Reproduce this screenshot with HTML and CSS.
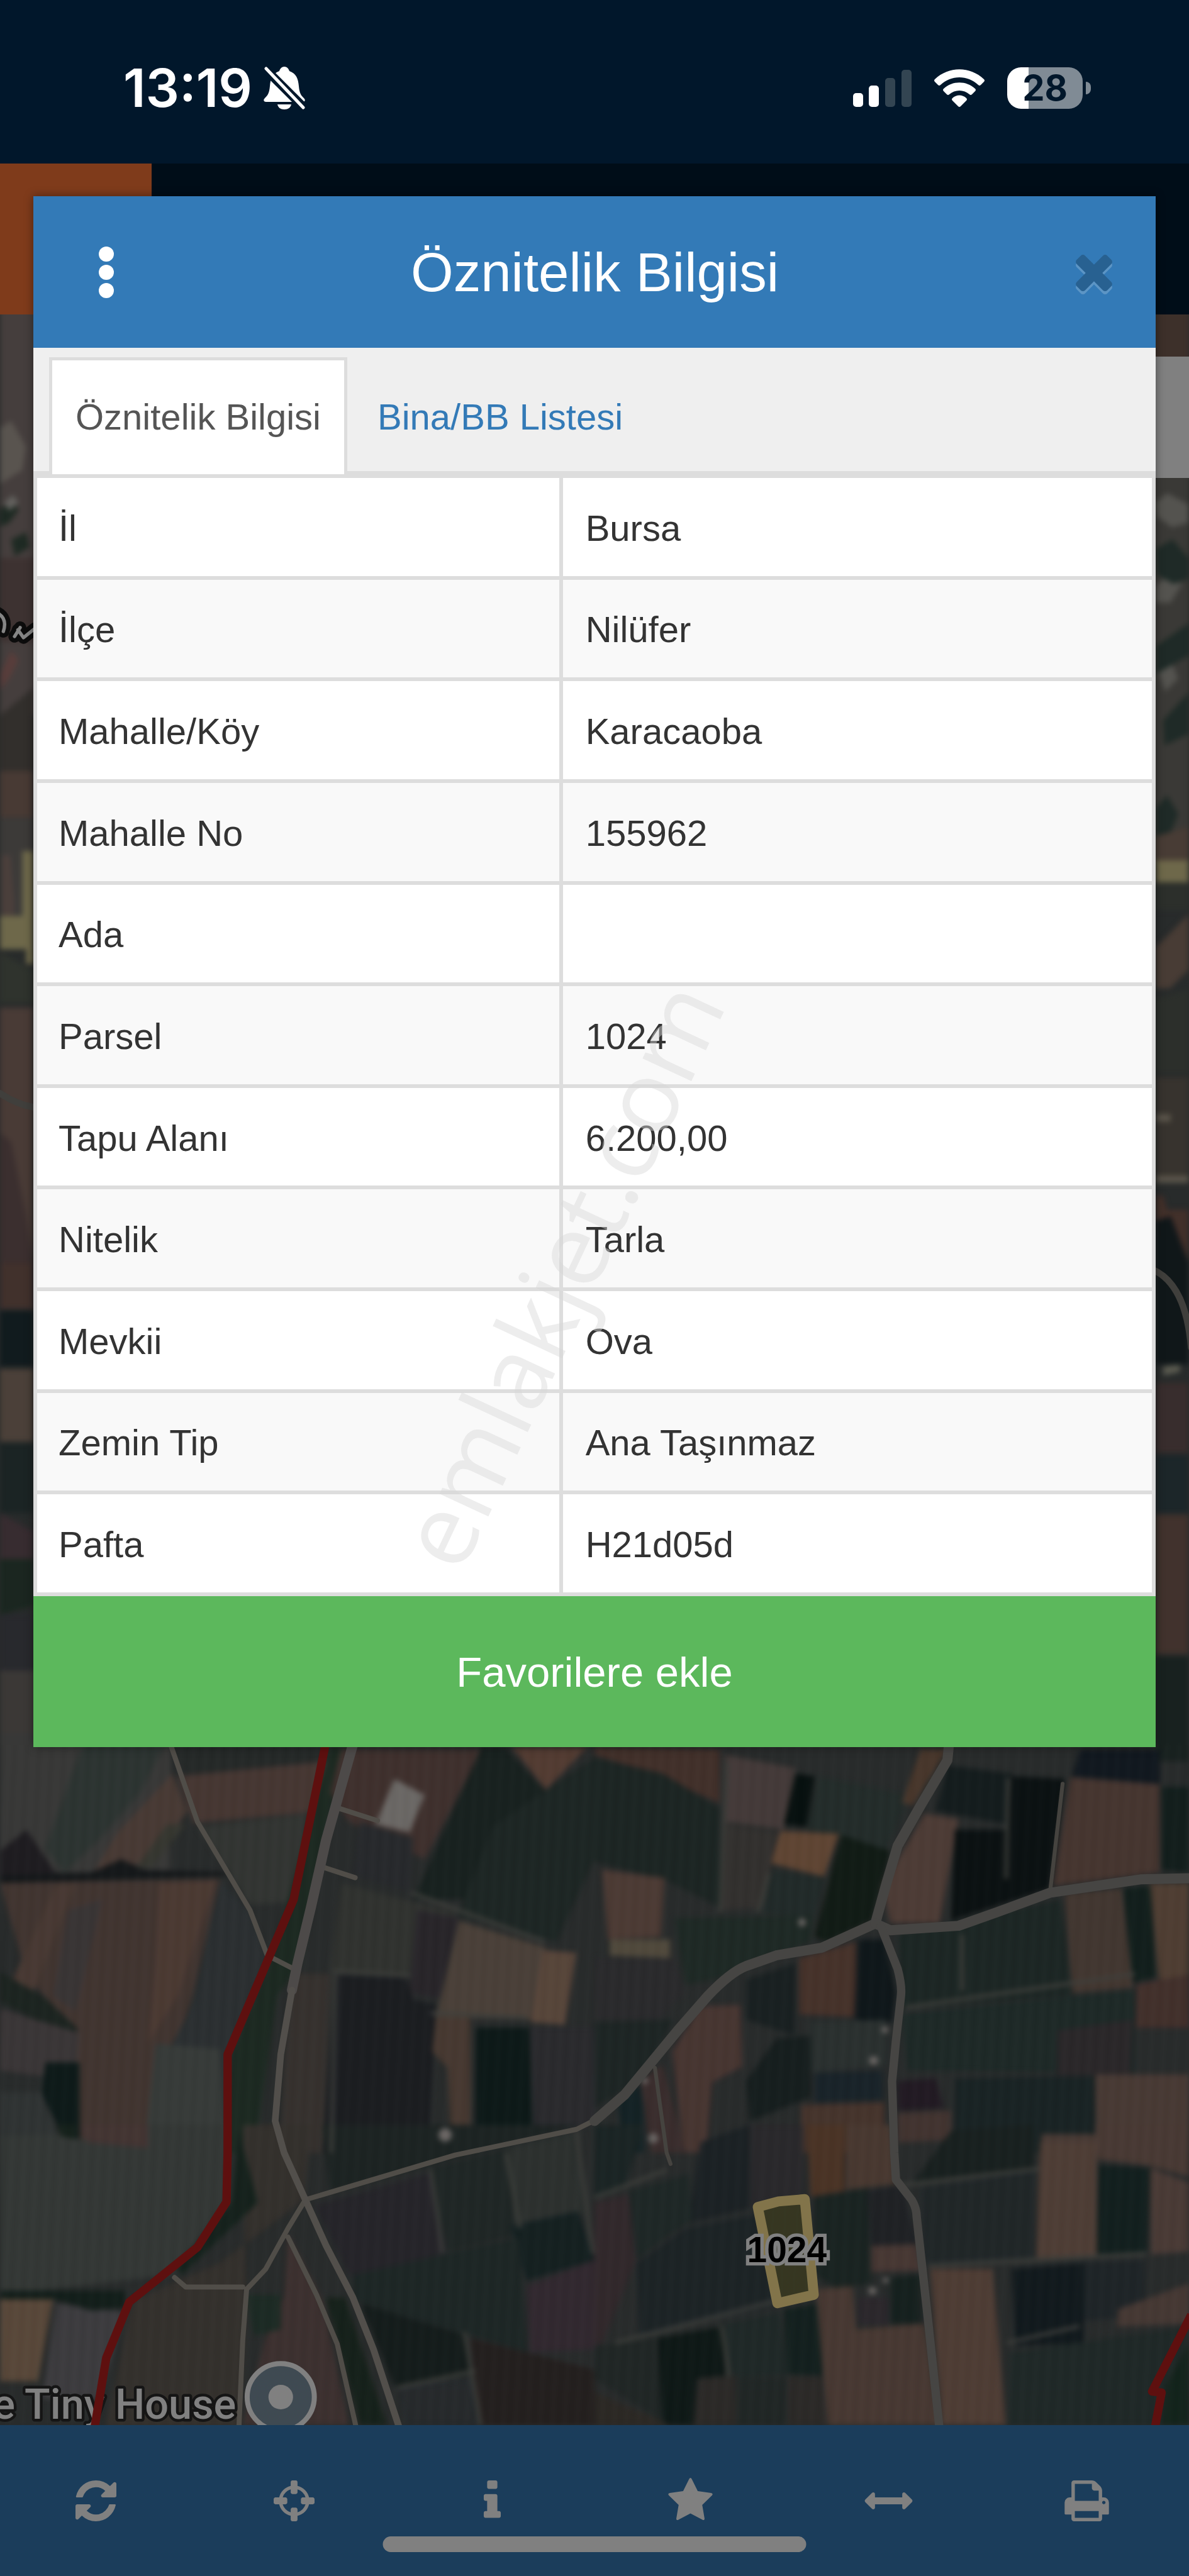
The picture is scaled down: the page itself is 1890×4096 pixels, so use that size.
FILE: index.html
```html
<!DOCTYPE html>
<html lang="tr">
<head>
  <meta charset="UTF-8" />
  <meta name="viewport" content="width=device-width, initial-scale=1.0" />
  <title>Öznitelik Bilgisi</title>
  <link rel="stylesheet" href="styles.css">
</head>
<body>
  <div class="screen">
    <header class="status-bar">
      <div class="status-left">
        <span class="time">13:19</span>
        <svg class="bell" viewBox="0 0 66 70" aria-hidden="true">
          <path fill="#fff" d="M33 1c-5 0-7 4-8 7C14 12 11 20 10 32c-1 12-4 15-8 19-3 3-2 6 2 6h58c4 0 5-3 2-6-4-4-7-7-8-19-1-12-4-20-15-24-1-3-3-7-8-7zM22 61c1 5 5 8 11 8s10-3 11-8z"/>
          <path stroke="#01172b" stroke-width="14" d="M2 4l62 62"/>
          <path stroke="#fff" stroke-width="5" stroke-linecap="round" d="M4 4l59 62"/>
        </svg>
      </div>
      <div class="status-right">
        <svg class="signal" viewBox="0 0 93 59" aria-hidden="true">
          <g fill="#fff"><rect y="37" width="16" height="22" rx="5"/><rect x="25" y="25" width="16" height="34" rx="5"/></g>
          <g fill="#334552"><rect x="51" y="13" width="16" height="46" rx="5"/><rect x="77" width="16" height="59" rx="5"/></g>
        </svg>
        <svg class="wifi" viewBox="0 0 80 60" aria-hidden="true">
          <g fill="#fff"><path d="M1 16C23-5 57-5 79 16q2 2 0 4l-5 5q-2 2-4 0C53 9 27 9 10 25q-2 2-4 0l-5-5q-2-2 0-4z"/><path d="M15 31c14-13 36-13 50 0q2 2 0 4l-5 5q-2 2-4 0c-9-8-23-8-32 0q-2 2-4 0l-5-5q-2-2 0-4z"/><path d="M29 46c6-6 16-6 22 0q2 2 0 4l-9 9q-2 2-4 0l-9-9q-2-2 0-4z"/></g>
        </svg>
        <div class="battery"><span>28</span></div>
      </div>
    </header>
    <div class="app-header"><div class="menu-block"></div></div>

    <main class="map">
      <svg class="map-image" viewBox="0 562 2126 3775" preserveAspectRatio="xMidYMin slice" aria-hidden="true">
        <defs>
          <filter id="soft" x="0" y="0" width="100%" height="100%" color-interpolation-filters="sRGB">
            <feGaussianBlur stdDeviation="5"/>
            <feColorMatrix type="saturate" values="0.85"/>
          </filter>
          <pattern id="rows" width="22" height="60" patternUnits="userSpaceOnUse" patternTransform="rotate(3)">
            <rect width="7" height="60" fill="#fff" opacity=".02"/><rect x="12" width="4" height="60" fill="#000" opacity=".06"/>
          </pattern>
        </defs>
        <rect y="562" width="2126" height="3775" fill="#282b2b"/>
        <g filter="url(#soft)">
          <!-- left edge -->
          <g transform="translate(0 550) scale(.333 1.658)">
            <path fill="#463e3c" d="M0 0h240v440H0z"/>
            <path fill="#5a544e" d="M0 130l60-8 80 28-20 25L0 190z"/>
            <path fill="#1d2a22" d="M0 218l60-12 40 12-50 14-50 4zM60 250l80-8 20 16-80 10z"/>
            <path fill="#62605c" d="M20 210l50-8 30 8-50 9z"/>
            <path fill="#3f3230" d="M0 270h200v90H0z"/>
            <path fill="#5c3c3a" d="M0 395l60-25 40 10-50 20-50 12z"/>
            <path fill="#332f2b" d="M0 440l180-30v90H0z"/>
            <path fill="#4a3a33" d="M0 500h180v50H0z"/>
            <path fill="#3c3a38" d="M0 550h180v110H0z"/>
            <path fill="#4c3f3a" d="M8 590h50l20 50v15H8z"/>
            <path fill="#6f6845" d="M0 656h120v-70h60v122h-40v-16H0z"/>
            <path fill="#2f332c" d="M0 695l180 20v35H0z"/>
            <path fill="#4b3b35" d="M0 755h180v270H0z"/>
            <path fill="#3d2f2e" d="M0 890l60 10 80 80 40 50H0z"/>
            <path fill="#43302b" d="M0 1030h180v50H0z"/>
            <path fill="#101b1f" d="M0 1082h180v60H0z"/>
            <path fill="#4d4037" d="M0 1145h180v78H0z"/>
            <path fill="#1a2424" d="M0 1225h180v75H0z"/>
            <path fill="#382c30" d="M0 1300l180 20v40H0z"/>
            <path fill="#19271f" d="M0 1350h180v50l-180 10z"/>
            <path fill="#28292e" d="M0 1410h180v60H0z"/>
            <path fill="#3b3836" d="M0 1470h240v98H0z"/>
          </g>
          <!-- right edge -->
          <g transform="translate(2040 550) scale(.333 1.658)">
            <path fill="#3f3029" d="M0 0h260v60H0z"/>
            <path fill="#3a3935" d="M0 180h260v420H0z"/>
            <path fill="#54534e" d="M80 210l60-10 116 12v20l-90 5-80-12zM80 300l70-12 70 10-60 20H80zM90 390l60-15 50 25-70 14z"/>
            <path fill="#1d2a27" d="M80 260l90-10 86 20v22l-80 6-90-10zM80 365l180-25v35l-180 20zM120 445l136-30v45l-130 12zM80 540l60-14 60 20-60 30H80z"/>
            <path fill="#4a3c33" d="M80 570l176-10v40H80zM80 690l80-16 96-20v60l-100 20H80z"/>
            <path fill="#6f6845" d="M80 596h176v24H80z"/>
            <path fill="#2c2f2b" d="M80 620h176v30H80zM80 745l176-10v90H80z"/>
            <path fill="#38332d" d="M80 830h176v110H80z"/>
            <path fill="#5b5448" d="M80 870h80v8H80zM80 936h176v8H80z"/>
            <path fill="#452f28" d="M80 958h40l20 15h115v60l-150-30H80z"/>
            <path fill="#0f171a" d="M80 985l80-5 96 50v110H80z"/>
            <path fill="#5a5a4e" d="M120 1142l90-2v8l-90 4z"/>
            <path fill="#3a2d2c" d="M80 1160h176v75H80z"/>
            <path fill="#1b262a" d="M80 1238h176v62H80z"/>
            <path fill="#43322b" d="M80 1302h176v150H80z"/>
            <path fill="#17211f" d="M80 1455h176v113H80z"/>
          </g>
          <!-- fields west -->
          <g transform="translate(0 3100) scale(.678 .4783)">
            <path fill="#383837" d="M0 0h450v520H0z"/>
            <path fill="#2b3431" d="M230 0h220L370 220 260 400 170 520l-50-90 70-280z"/>
            <path fill="#252928" d="M440 0h430v100L500 160l-40-60z"/>
            <path fill="#4a3a33" d="M455 150l40 140-95 190-150 30 60-140z"/>
            <path fill="#36372f" d="M440 340l50 0-90 160-40 0z"/>
            <path fill="#483731" d="M470 160l390-55-40 190-310 40z"/>
            <path fill="#323532" d="M520 350l290-50-30 330-120 10z"/>
            <path fill="#1e1c20" d="M70 360l80 170H0v-90z"/>
            <path fill="#15181a" d="M0 530l240-10 80-50 60 40 220 8v14L0 560z"/>
            <path fill="#43352f" d="M0 560l580-15-70 420-60 290-30 320H180l20-460-130-210z"/>
            <path fill="#4a3931" d="M150 560l50 0-110 400-60-30z"/>
            <path fill="#3a3535" d="M180 660l90-40-70 420-60-60z"/>
            <path fill="#4d3930" d="M420 560l150-10-100 430-80 180 20-300z"/>
            <path fill="#2a2f31" d="M580 550l80 120 45 160-90 340-30 220 20 180H390l30-320 90-240z"/>
            <path fill="#363b39" d="M410 1160l170 20 20 388H380z"/>
            <path fill="#1b2420" d="M0 890l120 100 90 120-60 10L0 1000z"/>
            <path fill="#3b3637" d="M0 1030l210 90-10 150-90 10-110-20z"/>
            <path fill="#0c1a19" d="M120 1230h90v290l-40-10-60-160z"/>
            <path fill="#2f3333" d="M0 1340h110l60 228H0z"/>
            <path fill="#1a2a20" d="M870 50h40l-70 440-50 380 -60 110-60 588h-70l10-370 110-370z"/>
            <path fill="#37312d" d="M770 900l100 0-20 668H740l10-300z"/>
            <path fill="#41302c" d="M900 60h370l-90 250-60 160-200-140-50-110z"/>
            <path fill="#6c6864" d="M1040 170l80 60-40 140-90-30z"/>
            <path fill="#27292c" d="M950 330l140 60-10 200-150-60z"/>
            <path fill="#17211f" d="M1270 50h60l110 170-90 250-60 150-200 0z"/>
            <path fill="#1c2624" d="M1440 210l128-120v380l-100 310-260-100 90-330z"/>
            <path fill="#563b30" d="M1350 50h200l-110 160z"/>
            <path fill="#30322f" d="M900 560l300 110-30 230-300-10z"/>
            <path fill="#28252a" d="M1100 660l110 30-50 300-80-20z"/>
            <path fill="#4b4037" d="M1210 700l230 100-30 270-260-10z"/>
            <path fill="#5a4538" d="M1430 810l90 10-30 270-90-10z"/>
            <path fill="#1b1d21" d="M885 905l185 10 20 80 60 20-20 555H850l20-400z"/>
            <path fill="#0b1918" d="M1255 1100h140l10 400-150 30z"/>
            <path fill="#2a2a2e" d="M1400 1100h168v360l-160 50z"/>
            <path fill="#49392f" d="M1150 1060h90v450l-50 20-10-280-40-60z"/>
          </g>
          <!-- fields east -->
          <g transform="translate(1063 3100) scale(.678 .4783)">
            <path fill="#442f28" d="M0 50l330 10v200L150 150 0 80z"/>
            <path fill="#1b2523" d="M0 90l180 60 150 130v370l-140-100L0 480z"/>
            <path fill="#453a38" d="M345 80l185 50-30 230-160-30z"/>
            <path fill="#32302e" d="M345 340l140 30-40 280-110 10z"/>
            <path fill="#06100f" d="M530 150l50 10-20 190-60-10z"/>
            <path fill="#222c2a" d="M590 160l240 70-60 210-150-60-60-20z"/>
            <path fill="#63442f" d="M490 365l155 10-40 160-140-50z"/>
            <path fill="#202a29" d="M470 510l140 30-30 150-140-20z"/>
            <path fill="#101b15" d="M650 380l130 60-50 260-120 80-30-20z"/>
            <path fill="#4b3729" d="M860 60h70l-90 210-30-10z"/>
            <path fill="#4f3b34" d="M870 300l90 20-50 390-130 0-20-140z"/>
            <path fill="#0a1112" d="M950 360l140 0 10-200 140 10-40 410-260 120z"/>
            <path fill="#131c1d" d="M930 120l170 30-10 190-190-50z"/>
            <path fill="#101820" d="M1280 60h210v130l-230-30z"/>
            <path fill="#48352e" d="M1255 165l235 25v330l-280 50z"/>
            <path fill="#111e1c" d="M1495 200h73v320l-73-10z"/>
            <path fill="#4e3a32" d="M20 510l165 30-10 220-140 10z"/>
            <path fill="#51493a" d="M40 770h160v70L40 830z"/>
            <path fill="#2a2a2c" d="M0 840h210l30 130-70 100H0z"/>
            <path fill="#1d2925" d="M210 690l370-10-10 100-250 140-80 20z"/>
            <path fill="#1c2524" d="M0 1080l210-10-90 230L0 1400z"/>
            <path fill="#182021" d="M400 920l130-60v270l-130-60z"/>
            <path fill="#493128" d="M540 840l150-60v280l-150-10z"/>
            <path fill="#0e171b" d="M695 770h70l30 200-10 110-100-10z"/>
            <path fill="#1b2624" d="M800 750l430-130 30 360-450 50z"/>
            <path fill="#44372f" d="M1240 600l150-20 30 370-160 20z"/>
            <path fill="#101f1c" d="M1395 580l70-10 15 340-60 20z"/>
            <path fill="#513e30" d="M1465 560h103v360l-80 0z"/>
            <path fill="#452f2a" d="M1430 940l138-40v200l-140 0z"/>
            <path fill="#1c2927" d="M810 1050l615-90v310l-600-10z"/>
            <path fill="#2a2729" d="M1220 1110l200-40-5 200-195 30z"/>
            <path fill="#4a3530" d="M280 1020l105-5 5 230-80 60-15 263h-60l-30-380z"/>
            <path fill="#151e1e" d="M480 1140l90-10v230l-160 90-10-150z"/>
            <path fill="#29302f" d="M570 1080l200-10v170l-200 30z"/>
            <path fill="#18232a" d="M580 1270l180-10v110l-180 10z"/>
            <path fill="#231a24" d="M800 1300l100-10 20 110-120 10z"/>
            <path fill="#48332a" d="M545 1390l220-10v188H545z"/>
            <path fill="#44342f" d="M800 1420l140-10v110l-140 10z"/>
            <path fill="#182324" d="M950 1290l370-10v288H950z"/>
            <path fill="#4a3a33" d="M1320 1275h248v293h-390v-70l145 0z"/>
            <path fill="#122226" d="M60 1380l70-80v268H80z"/>
            <path fill="#3c2d2c" d="M120 1300l60-60 60 328h-90z"/>
          </g>
          <!-- fields south west -->
          <g transform="translate(0 3800) scale(.678 .5153)">
            <path fill="#333735" d="M0 40l160-10 50 20 180 10V0h210v260L460 520 0 590z"/>
            <path fill="#453431" d="M210 0h180v80l-160-20z"/>
            <path fill="#14211b" d="M150 0h50v50l-40-10z"/>
            <path fill="#34302b" d="M640 0h180l-20 260-220 220-230 130-70 440h350l20-400z"/>
            <path fill="#5a4736" d="M0 605h140L100 890H0z"/>
            <path fill="#3c3b3e" d="M150 620l180 30-70 300H110z"/>
            <path fill="#111e1a" d="M0 575h330v60l-90 10-100-40H0z"/>
            <path fill="#13221c" d="M630 20l50 250-200 250-20-20 150-230z"/>
            <path fill="#3e302e" d="M760 380l90 230 70 433H640l60-300 50-150z"/>
            <path fill="#1a2b24" d="M650 590h90v120l-70 20z"/>
            <path fill="#1b2322" d="M850 0h680l-660 230z"/>
            <path fill="#25242a" d="M830 280l330-120 20 300-250 80z"/>
            <path fill="#1e2625" d="M1130 150l210-70 30 300-190 60z"/>
            <path fill="#2b302e" d="M1340 80l170-50 30 280-180 50z"/>
            <path fill="#132021" d="M1345 350l180-50 43 170-180 70z"/>
            <path fill="#1c2625" d="M930 520l440-130 20 400-460-180z"/>
            <path fill="#322830" d="M1390 560l178-90v310l-170 10z"/>
            <path fill="#131c1b" d="M950 620l280 110 10 140-200 40z"/>
            <path fill="#25292c" d="M1050 910l190-30 20 163h-190z"/>
            <path fill="#241f1e" d="M1240 740l328 110v193h-300z"/>
            <path fill="#142119" d="M860 600l50 0 110 443h-70z"/>
          </g>
          <!-- fields south east -->
          <g transform="translate(1063 3800) scale(.678 .5153)">
            <path fill="#192424" d="M0 0h130l-50 220-80 40z"/>
            <path fill="#1a2125" d="M280 60l130-60v290l-160 50z"/>
            <path fill="#29282b" d="M410 0h140v240l-140 40z"/>
            <path fill="#4d3222" d="M560 0h100v230l-90 20z"/>
            <path fill="#4a382e" d="M665 0h115l15 205-130 20z"/>
            <path fill="#32282b" d="M0 270l90-30 20 230-90 290H0z"/>
            <path fill="#1d2726" d="M90 230l160-60 10 160-70 60-80 80z"/>
            <path fill="#1b2326" d="M110 480l130-120 190-50 50 320-360 100z"/>
            <path fill="#182321" d="M580 250l140-30 10 330-90 20-60-50z"/>
            <path fill="#1f2125" d="M720 230l90-20 40 200-120 10z"/>
            <path fill="#1f2628" d="M860 220l300-60v300l-290 20z"/>
            <path fill="#17201f" d="M940 20l220-20v150l-320 50z"/>
            <path fill="#503d33" d="M1175 60l150 0v400l-160 0z"/>
            <path fill="#4a3932" d="M1320 0h248v180l-110-40-130-20z"/>
            <path fill="#101f1e" d="M1330 140l135 10-10 300-130 10z"/>
            <path fill="#4b3a34" d="M1465 150l103 50v240l-100 10z"/>
            <path fill="#493732" d="M730 420l120-5 10 90-130 5z"/>
            <path fill="#14201e" d="M780 530l80-10v170l-80 0z"/>
            <path fill="#2b272c" d="M695 600l80 0v95l-80-5z"/>
            <path fill="#493830" d="M585 570l95-10 10 150 180-20 40 353H615z"/>
            <path fill="#503c32" d="M885 500h165l35 543H915z"/>
            <path fill="#10191e" d="M1100 500l190-20v280l-180 5z"/>
            <path fill="#1d2428" d="M1290 480l160-10v190l-160 20z"/>
            <path fill="#473832" d="M1380 640l188-90v140l-190 10z"/>
            <path fill="#1e2827" d="M1095 790l473-90v343h-480z"/>
            <path fill="#0d1816" d="M165 740l170-40 10 170-75 10-10 163h-80z"/>
            <path fill="#1e2827" d="M340 690l150-40 20 220-160 10z"/>
            <path fill="#11201e" d="M500 640l85-20 15 250-90-5z"/>
            <path fill="#2b2927" d="M275 880l100-10v173H260zM510 875h90l10 168H510z"/>
            <path fill="#1f2625" d="M375 880h130v163H375zM0 770l160-30 20 290L0 880z"/>
            <path fill="#2c2823" d="M0 930l200 113H0z"/>
            <path fill="#10241a" d="M1568 760v283h-70l10-140z"/>
          </g>
          <rect y="3120" width="2126" height="1217" fill="url(#rows)"/>
          <g fill="#6b6664">
            <circle cx="1434" cy="3438" r="7"/><circle cx="1582" cy="3630" r="6"/><circle cx="1562" cy="3685" r="8"/>
            <circle cx="1153" cy="3721" r="6"/><circle cx="1168" cy="3824" r="9"/><circle cx="796" cy="3818" r="12"/>
            <circle cx="1560" cy="4097" r="7"/><circle cx="1584" cy="4078" r="5"/>
          </g>
          <g fill="none" stroke="#3f403c" stroke-width="6">
            <path d="M1300 3150l-12 270M1375 3350l-20 70M1803 3180l-4 180M1720 3460v100M1620 3590l410-60M735 3385l240 88M600 3530l-8 320M595 3525l140 8M770 3600l170 8"/>
            <path d="M1063 3930l130-50M1100 4190l300-78M1290 4160l14 90M1610 3908l250-30M1660 4052l390-22M1800 4190l130-30M770 3880l22 150M905 3850l25 135M1030 3810l30 220M830 4170l30 167M710 4270l140-30"/>
          </g>
        </g>
        <!-- roads -->
        <g fill="none" stroke-linejoin="round" stroke-linecap="round">
          <g stroke="#504d48" stroke-width="9">
            <path d="M305 3120l48 138 54 91 40 67 31 81 47 24"/>
            <path d="M546 3934l-31 51-40 73-34 36-7 92-7 160M515 4001l51 103 37 88 34 150M312 4073l20 17h102"/>
            <path d="M546 3934l268-80 217-46 40-20"/>
            <path d="M1171 3698l21 152 7 20M1900 3190l-22 190" stroke="#45433f" stroke-width="7"/>
            <path d="M600 3232l75 24M580 3340l55 18"/>
          </g>
          <path stroke="#4d4a49" stroke-width="18" d="M631 3120l-48 171-27 120-24 100-10 48"/>
          <path stroke="#524f4b" stroke-width="12" d="M522 3559l-20 115-10 119 16 57 38 84 37 82 48 93 37 93 46 140"/>
          <g stroke="#464543" stroke-width="18">
            <path d="M1063 3793l54-47 95-115 54-62q40-42 68-53l54-19 82-14 95-43 20-72 20-67 41-72 48-81 3-30"/>
            <path d="M1565 3440l27 12 122-8 68-24 95-35 162-24 90-2"/>
            <path d="M1575 3445l30 76q8 30 6 48l-9 81-7 72 4 128 3 48 28 36q9 15 9 30l21 191 20 190" stroke-width="15"/>
          </g>
          <path stroke="#403f3c" stroke-width="12" d="M2060 2270q60 25 70 140M0 1955q30 20 60 25"/>
          <path stroke="#0c0c0c" stroke-width="22" d="M-6 1095q20 10 12 34M26 1138l10-16M32 1126l10 14 20-16"/>
          <path stroke="#858585" stroke-width="6" d="M-6 1095q20 10 12 34M26 1138l10-16M32 1126l10 14 20-16"/>
        </g>
        <text class="place" x="422" y="4326">e Tiny House</text>
        <!-- cadastral boundary -->
        <g fill="none" stroke="#5e100f" stroke-width="15" stroke-linejoin="round">
          <path d="M583 3115l-58 282-118 277v176l-2 88-52 81-122 98-41 100-21 125M2130 4140l-70 137 17 2-12 63"/>
        </g>
        <circle cx="502" cy="4287" r="60" fill="#3f4a52" stroke="#808080" stroke-width="9"/>
        <circle cx="502" cy="4287" r="22" fill="#808080"/>
        <path fill="#393a1f" fill-opacity=".8" stroke="#82744a" stroke-width="18" stroke-linejoin="round" d="M1355 3947l37-10 47-4 16 171-65 15z"/>
        <text class="parcel" x="1407" y="4046">1024</text>
      </svg>
      <div class="map-button"></div>
    </main>

    <nav class="toolbar">
      <button type="button" aria-label="Yenile"><svg viewBox="128 128 1536 1536"><path transform="translate(128 128)" d="M1511 928q0 5-1 7-64 268-268 434.5t-478 166.5q-146 0-282.5-55t-243.5-157l-129 129q-19 19-45 19t-45-19-19-45v-448q0-26 19-45t45-19h448q26 0 45 19t19 45-19 45l-137 137q71 66 161 102t187 36q134 0 250-65t186-179q11-17 53-117 8-23 30-23h192q13 0 22.5 9.5t9.5 22.5zm25-800v448q0 26-19 45t-45 19h-448q-26 0-45-19t-19-45 19-45l138-138q-148-137-349-137-134 0-250 65t-186 179q-11 17-53 117-8 23-30 23h-199q-13 0-22.5-9.5t-9.5-22.5v-7q65-268 270-434.5t480-166.5q146 0 284 55.5t245 156.5l130-129q19-19 45-19t45 19 19 45z"/></svg></button>
      <button type="button" aria-label="Konum"><svg viewBox="128 128 1536 1536"><path d="M1325 1024h-109q-26 0-45-19t-19-45v-128q0-26 19-45t45-19h109q-32-108-112.5-188.5t-188.5-112.5v109q0 26-19 45t-45 19h-128q-26 0-45-19t-19-45v-109q-108 32-188.5 112.5t-112.5 188.5h109q26 0 45 19t19 45v128q0 26-19 45t-45 19h-109q32 108 112.5 188.5t188.5 112.5v-109q0-26 19-45t45-19h128q26 0 45 19t19 45v109q108-32 188.5-112.5t112.5-188.5zm339-192v128q0 26-19 45t-45 19h-143q-37 161-154.5 278.5t-278.5 154.5v143q0 26-19 45t-45 19h-128q-26 0-45-19t-19-45v-143q-161-37-278.5-154.5t-154.5-278.5h-143q-26 0-45-19t-19-45v-128q0-26 19-45t45-19h143q37-161 154.5-278.5t278.5-154.5v-143q0-26 19-45t45-19h128q26 0 45 19t19 45v143q161 37 278.5 154.5t154.5 278.5h143q26 0 45 19t19 45z"/></svg></button>
      <button type="button" aria-label="Bilgi"><svg viewBox="128 128 1536 1536"><path d="M1216 1344v128q0 26-19 45t-45 19h-512q-26 0-45-19t-19-45v-128q0-26 19-45t45-19h64v-384h-64q-26 0-45-19t-19-45v-128q0-26 19-45t45-19h384q26 0 45 19t19 45v576h64q26 0 45 19t19 45zm-128-1152v192q0 26-19 45t-45 19h-256q-26 0-45-19t-19-45v-192q0-26 19-45t45-19h256q26 0 45 19t19 45z"/></svg></button>
      <button type="button" aria-label="Favoriler"><svg viewBox="128 128 1536 1536"><path d="M1728 647q0 22-26 48l-363 354 86 500q1 7 1 20 0 21-10.5 35.5t-30.5 14.5q-19 0-40-12l-449-236-449 236q-22 12-40 12-21 0-31.5-14.5t-10.5-35.5q0-6 2-20l86-500-364-354q-25-27-25-48 0-37 56-46l502-73 225-455q19-41 49-41t49 41l225 455 502 73q56 9 56 46z"/></svg></button>
      <button type="button" aria-label="Ölçüm"><svg viewBox="128 128 1536 1536"><path d="M1792 896q0 26-19 45l-256 256q-19 19-45 19t-45-19-19-45v-128h-1024v128q0 26-19 45t-45 19-45-19l-256-256q-19-19-19-45t19-45l256-256q19-19 45-19t45 19 19 45v128h1024v-128q0-26 19-45t45-19 45 19l256 256q19 19 19 45z"/></svg></button>
      <button type="button" aria-label="Yazdır"><svg viewBox="128 128 1536 1536"><path d="M448 1536h896v-256h-896v256zm0-640h896v-384h-160q-40 0-68-28t-28-68v-160h-640v640zm1152 64q0-26-19-45t-45-19-45 19-19 45 19 45 45 19 45-19 19-45zm128 0v416q0 13-9.5 22.5t-22.5 9.5h-224v160q0 40-28 68t-68 28h-960q-40 0-68-28t-28-68v-160h-224q-13 0-22.5-9.5t-9.5-22.5v-416q0-79 56.5-135.5t135.5-56.5h64v-544q0-40 28-68t68-28h672q40 0 88 20t76 48l152 152q28 28 48 76t20 88v256h64q79 0 135.5 56.5t56.5 135.5z"/></svg></button>
      <div class="home-indicator"></div>
    </nav>

    <section class="modal" role="dialog" aria-labelledby="modalTitle">
      <div class="modal-header">
        <button type="button" class="more" aria-label="Menü"><i></i><i></i><i></i></button>
        <h1 id="modalTitle">Öznitelik Bilgisi</h1>
        <button type="button" class="close" aria-label="Kapat"><svg viewBox="302 302 1188 1252"><path d="M1490 1322q0 40-28 68l-136 136q-28 28-68 28t-68-28l-294-294-294 294q-28 28-68 28t-68-28l-136-136q-28-28-28-68t28-68l294-294-294-294q-28-28-28-68t28-68l136-136q28-28 68-28t68 28l294 294 294-294q28-28 68-28t68 28l136 136q28 28 28 68t-28 68l-294 294 294 294q28 28 28 68z"/></svg></button>
      </div>
      <div class="tabs">
        <a href="#oznitelik" class="tab active">Öznitelik Bilgisi</a>
        <a href="#bina" class="tab">Bina/BB Listesi</a>
      </div>
      <table class="info" id="oznitelik">
        <tr><th scope="row">İl</th><td>Bursa</td></tr>
        <tr><th scope="row">İlçe</th><td>Nilüfer</td></tr>
        <tr><th scope="row">Mahalle/Köy</th><td>Karacaoba</td></tr>
        <tr><th scope="row">Mahalle No</th><td>155962</td></tr>
        <tr><th scope="row">Ada</th><td></td></tr>
        <tr><th scope="row">Parsel</th><td>1024</td></tr>
        <tr><th scope="row">Tapu Alanı</th><td>6.200,00</td></tr>
        <tr><th scope="row">Nitelik</th><td>Tarla</td></tr>
        <tr><th scope="row">Mevkii</th><td>Ova</td></tr>
        <tr><th scope="row">Zemin Tip</th><td>Ana Taşınmaz</td></tr>
        <tr><th scope="row">Pafta</th><td>H21d05d</td></tr>
      </table>
      <button type="button" class="favorite">Favorilere ekle</button>
    </section>
    <div class="watermark">emlakjet.com</div>
  </div>
</body>
</html>
```
FILE: styles.css
```css
* {
  box-sizing: border-box;
}
body {
  margin: 0;
  background: #01172b;
  font-family: "Liberation Sans", Helvetica, Arial, sans-serif;
  font-size: 58px;
  color: #333;
}
button {
  padding: 0;
  border: none;
  background: none;
  font-family: inherit;
  cursor: pointer;
}
.screen {
  position: relative;
  display: flex;
  flex-direction: column;
  min-height: 100vh;
  overflow: hidden;
}

/* status bar */
.status-bar {
  display: flex;
  justify-content: space-between;
  height: 260px;
  padding: 107px 169px 87px 196px;
  font-family: Inter, "Liberation Sans", sans-serif;
  color: #fff;
}
.status-left,
.status-right {
  display: flex;
  align-items: center;
}
.status-left {
  gap: 18px;
}
.status-right {
  gap: 36px;
}
.time {
  font-size: 84px;
  font-weight: 600;
  line-height: 66px;
}
.bell {
  width: 66px;
  height: 70px;
}
.signal {
  width: 93px;
  height: 59px;
}
.wifi {
  width: 80px;
  height: 60px;
}
.battery {
  position: relative;
  display: flex;
  align-items: center;
  justify-content: center;
  width: 120px;
  height: 66px;
  border-radius: 22px;
  background: linear-gradient(90deg, #fff 34px, #808b95 34px);
  color: #01172b;
  font-size: 56px;
  font-weight: 700;
}
.battery::after {
  content: "";
  position: absolute;
  right: -13px;
  top: 23px;
  width: 8px;
  height: 20px;
  border-radius: 0 8px 8px 0;
  background: #808b95;
}
.app-header {
  height: 240px;
  background: #000d18;
}
.menu-block {
  width: 241px;
  height: 100%;
  background: #7f3b1b;
}

/* map */
.map {
  position: relative;
  flex: 1;
  overflow: hidden;
}
.map-image {
  position: absolute;
  width: 100%;
  height: 100%;
}
.map-button {
  position: absolute;
  top: 67px;
  right: 0;
  width: 120px;
  height: 193px;
  background: #808080;
}
.place {
  font: 500 75px Roboto, sans-serif;
  fill: #808080;
  stroke: #151515;
  stroke-width: 10px;
  stroke-linejoin: round;
  paint-order: stroke;
  text-anchor: end;
}
.parcel {
  font: bold 64px "Liberation Sans", Arial, sans-serif;
  fill: #000;
  stroke: #808080;
  stroke-width: 12px;
  paint-order: stroke;
  text-anchor: middle;
}

/* bottom toolbar */
.toolbar {
  position: relative;
  display: flex;
  height: 240px;
  background: #1b3d5b;
}
.toolbar button {
  flex: 1;
  display: flex;
  align-items: center;
  justify-content: center;
  padding-right: 10px;
}
.toolbar svg {
  width: 65px;
  height: 65px;
  fill: #808080;
  overflow: visible;
}
.home-indicator {
  position: absolute;
  left: 50%;
  bottom: 38px;
  width: 673px;
  height: 25px;
  border-radius: 13px;
  background: #808080;
  transform: translateX(-50%);
}

/* modal */
.modal {
  position: absolute;
  top: 312px;
  left: 53px;
  right: 53px;
  background: #fff;
  box-shadow: 0 0 14px rgba(0, 0, 0, 0.4);
}
.modal-header {
  display: flex;
  align-items: center;
  justify-content: space-between;
  height: 241px;
  padding: 0 69px 0 104px;
  background: #337ab7;
  color: #fff;
}
.modal-header h1 {
  margin: 0;
  font-size: 87px;
  font-weight: normal;
}
.more {
  display: flex;
  flex-direction: column;
  gap: 5px;
  width: 24px;
}
.more i {
  height: 24px;
  border-radius: 50%;
  background: #fff;
}
.close svg {
  display: block;
  width: 58px;
  height: 61px;
  opacity: 0.2;
  filter: drop-shadow(0 5px 0 #fff);
}
.tabs {
  display: flex;
  gap: 6px;
  padding: 15px 25px 0;
  border-bottom: 5px solid #ddd;
  background: #efefef;
}
.tab {
  margin-bottom: -5px;
  padding: 52px 37px 53px;
  border: 5px solid transparent;
  border-bottom: none;
  line-height: 76px;
  color: #337ab7;
  text-decoration: none;
}
.tab.active {
  border-color: #ddd;
  background: #fff;
  color: #555;
}
.info {
  width: 100%;
  height: 1784px;
  border-collapse: collapse;
}
.info th,
.info td {
  padding: 3px 36px 0;
  border: 6px solid #ddd;
  font-weight: normal;
  text-align: left;
}
.info th {
  width: 47%;
  padding-left: 34px;
}
.info tr:nth-child(even) {
  background: #f9f9f9;
}
.favorite {
  display: block;
  width: 100%;
  height: 240px;
  background: #5cb85c;
  color: #fff;
  font-size: 67px;
}
.watermark {
  position: absolute;
  top: 2025px;
  left: 47%;
  font-family: "Open Sans", sans-serif;
  font-size: 160px;
  font-weight: 500;
  line-height: 1;
  color: rgba(215, 215, 215, 0.45);
  transform: translate(-50%, -50%) rotate(-65deg);
  pointer-events: none;
}
```
